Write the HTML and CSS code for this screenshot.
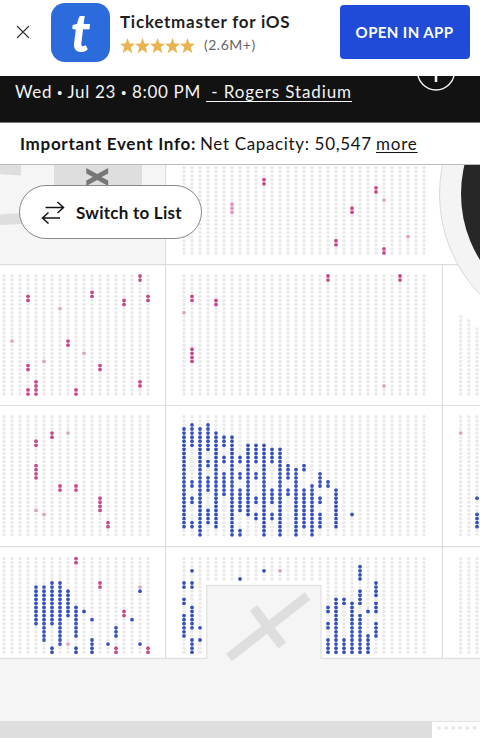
FILE: index.html
```html
<!DOCTYPE html>
<html lang="en">
<head>
<meta charset="utf-8">
<title>Rogers Stadium - Ticketmaster</title>
<link rel="stylesheet" href="styles.css">
</head>
<body>
<header class="banner">
  <svg class="close" viewBox="0 0 14 14"><path d="M1 1L13 13M13 1L1 13"/></svg>
  <div class="logo"><span class="logo-letter">t</span></div>
  <div class="app">
    <div class="app-name">Ticketmaster for iOS</div>
    <div class="rating">
      <svg class="stars" viewBox="0 0 75 16">
        <defs><path id="star" d="M7.5 0L9.5 5.6L15 5.8L10.7 9.2L12.3 15.2L7.5 11.8L2.7 15.2L4.3 9.2L0 5.8L5.5 5.6Z"/></defs>
        <use href="#star"/><use href="#star" x="15"/><use href="#star" x="30"/><use href="#star" x="45"/><use href="#star" x="60"/>
      </svg>
      <span class="count">(2.6M+)</span>
    </div>
  </div>
  <div class="open">OPEN IN APP</div>
</header>
<section class="event">
  <span class="date">Wed <span class="bullet">•</span> Jul 23 <span class="bullet">•</span> 8:00 PM</span><span class="venue">&nbsp;- Rogers Stadium</span>
  <svg class="plus" viewBox="0 0 42 16"><circle cx="21" cy="-4.5" r="18.5"/><path class="plus-stem" d="M21 0V6"/></svg>
</section>
<section class="info"><b class="info-label">Important Event Info:</b><span class="info-text">Net Capacity: 50,547</span><span class="more">more</span></section>
<main class="map">
  <svg class="seats" viewBox="0 165 480 573">
    <rect class="floor" x="0" y="165" width="165.5" height="99.5"/>
    <path class="shade" d="M54 165H142V210H54ZM0 165H21V175.5L0 174ZM0 214.500L22 213V224L0 225Z"/>
    <path class="gate" d="M86.300 168V173.500L92.800 177L86.300 180.500V186L97.200 180L108.200 186V180.500L101.500 177L108.200 173.500V168L97.200 174Z"/>
    <path class="line" d="M0 264.700H480M0 405.500H480M0 546.700H480M165.600 165V658.500M442.300 264.700V658.500"/>
    <circle class="ring" cx="584.500" cy="194" r="145"/>
    <circle class="stage" cx="585" cy="194" r="124"/>
    <path class="ground" d="M-2 658.500H206.700V585.500H321V658.500H482V740H-2Z"/>
    <path class="cross" d="M229 657.500L307.500 596M253.500 608L282.300 645.500"/>
    <path class="shade" d="M0 721H432V738H0Z"/>
    <path class="white" d="M432 721H480V738H432Z"/>
    <path class="white-edge" d="M432 721.500H480"/>
    <path class="row" d="M439 728H480"/>
    <g id="dots"></g>
  </svg>
  <div class="switch">
    <svg class="arrows" viewBox="0 0 24 24"><path d="M4.500 7.500H22M16.500 2L22.500 7.500L16.500 13M19 18H1.500M7.500 12.500L1.500 18L7.500 23.500"/></svg>
    <span class="switch-text">Switch to List</span>
  </div>
</main>
<script src="seats.js"></script>
</body>
</html>
```
FILE: seats.js
```js
const PITCH = 4.07;
// Each section: origin, column pitch, row count, column count, and runs as
// "column:first-last" for blue (b), resale (r), pale resale (p), accessible (k).
const sections = [
  { x: 184, y: 167.5, rows: 22, cols: 31,
    r: "10:3-4 24:5-6 21:10-11 19:18-19 25:20-21", p: "25:8 28:17", k: "6:9-11" },
  { x: 4, y: 276, rows: 30, cols: 19,
    r: "3:5-6 3:22-23 3:28-29 4:26-29 8:16-17 9:28-29 11:4-5 12:22-23 15:6-7 17:0-1 17:26-27 18:5-6",
    p: "1:16 5:21 7:8 10:19" },
  { x: 184, y: 276, rows: 30, cols: 31,
    r: "1:5-6 1:18-21 4:6-7 18:0-1 27:0-1", p: "0:9 25:27" },
  { x: 460.7, y: 276, rows: 30, cols: 3, dx: 8.15, starts: [10, 11, 13] },
  { x: 4, y: 416.8, rows: 30, cols: 19,
    r: "4:6-7 4:12-15 6:4-5 7:17-18 9:17-18 12:20-23 13:26-27", p: "4:23 5:24 8:4" },
  { x: 184, y: 416.8, rows: 30, cols: 31,
    b: "0:3-27 1:2-7 1:16-17 1:20-21 1:26-27 2:3-29 3:2-8 3:11-12 3:15-18 3:23-26 4:4-27 5:5-7 5:10-11 5:14-19 6:5-29 7:10-11 7:14-15 7:18-23 7:28-29 8:7-24 9:7-11 9:14-15 9:20-21 9:24-25 10:7-29 11:8-11 11:18-21 11:24-25 12:8-29 13:12-15 13:18-19 14:13-29 15:12-13 15:18-27 16:17-29 17:14-17 17:20-21 17:24-27 18:16-17 19:18-27 21:24" },
  { x: 460.7, y: 416.8, rows: 30, cols: 3, dx: 8.15, b: "2:20 2:24-27", p: "0:4" },
  { x: 4, y: 558.6, rows: 24, cols: 19,
    b: "4:7-16 5:7-20 6:6-16 6:22-23 7:6-21 8:8-14 9:12-19 9:22-23 10:13 11:15 11:20-23 13:21 14:17-19 16:15 17:8 17:21",
    r: "9:0-1 12:6-7 14:22-23 15:13-14 18:22-23", p: "8:21 17:7" },
  { x: 184, y: 558.6, rows: 24, cols: 31, notch: [3, 17, 5],
    b: "0:6-7 0:10-11 0:14-19 1:3 1:6-7 1:12-17 1:20-23 2:17 2:20 7:5 10:3 18:12-13 18:16-17 18:20-23 19:10-23 20:10-11 20:20-23 21:11-23 22:2-5 22:8-11 22:14-23 23:13 23:19-23 24:6-9 24:11-13 24:16-19",
    p: "12:3" },
  { x: 460.7, y: 558.6, rows: 24, cols: 3, dx: 8.15 }
];
const group = document.getElementById("dots");
function dot(s, col, row, kind) {
  const c = document.createElementNS("http://www.w3.org/2000/svg", "circle");
  c.setAttribute("cx", s.x + col * (s.dx || 8));
  c.setAttribute("cy", (s.y + row * PITCH).toFixed(2));
  c.setAttribute("r", kind === "off" ? 1.7 : 1.9);
  c.setAttribute("class", "seat-" + kind);
  group.appendChild(c);
}
for (const s of sections) {
  const taken = new Map();
  for (const kind of ["b", "r", "p", "k"]) {
    for (const run of (s[kind] || "").split(" ").filter(Boolean)) {
      const [col, range] = run.split(":");
      const [a, z] = range.split("-").map(Number);
      for (let r = a; r <= (z ?? a); r++) taken.set(col + ":" + r, kind);
    }
  }
  for (let col = 0; col < s.cols; col++) {
    for (let row = s.starts ? s.starts[col] : 0; row < s.rows; row++) {
      if (s.notch && col >= s.notch[0] && col <= s.notch[1] && row > s.notch[2]) continue;
      dot(s, col, row, taken.get(col + ":" + row) || "off");
    }
  }
}
```
FILE: styles.css
```css
* { box-sizing: border-box; }
body { margin: 0; width: 480px; height: 738px; overflow: hidden; background: #fff; color: #1f1f1f; font-family: Lato, "Liberation Sans", sans-serif; white-space: nowrap; }
.banner { height: 76px; display: flex; align-items: flex-start; padding-left: 16px; }
.close { width: 14px; height: 14px; margin-top: 25px; fill: none; stroke: #333; stroke-width: 1.1; }
.logo { width: 59px; height: 59px; margin: 3px 0 0 21px; border-radius: 14px; background: #2c6bdc; color: #fff; display: flex; justify-content: center; }
.logo-letter { font: italic 900 53px/57px Lato, sans-serif; }
.app { margin: 11px 0 0 10px; width: 219.500px; }
.app-name { font-size: 17px; line-height: 22px; font-weight: 700; letter-spacing: 0.75px; }
.rating { display: flex; align-items: center; gap: 9px; height: 22px; margin-top: 0; }
.stars { width: 75px; height: 16px; fill: #e8b451; margin-top: 3px; }
.count { font-size: 14px; color: #666; letter-spacing: 0.5px; }
.open { width: 130px; height: 54px; margin: 5px 0 0 0; border-radius: 4px; background: #1f4bd8; color: #fff; font-size: 15px; font-weight: 700; letter-spacing: 0.4px; line-height: 54px; text-align: center; }
.event { height: 47px; background: #121212; border-bottom: 1px solid #777; color: #f4f4f4; display: flex; padding-left: 15px; font-size: 17px; line-height: 31px; }
.date { width: 191px; letter-spacing: 0.7px; }
.bullet { font: 14px/20px "Liberation Sans", sans-serif; }
.venue { width: 146px; letter-spacing: 0.9px; text-decoration: underline; text-underline-offset: 3px; text-decoration-thickness: 1px; }
.plus { width: 42px; height: 16px; margin-left: 62.500px; fill: none; stroke: #f4f4f4; stroke-width: 1.4; }
.plus-stem { stroke-width: 2.600; }
.info { height: 42px; padding-left: 20px; display: flex; font-size: 17px; line-height: 41px; border-bottom: 1px solid #bbb; color: #151515; }
.info-label { width: 180px; letter-spacing: 0.7px; }
.info-text { width: 176px; letter-spacing: 0.65px; }
.more { letter-spacing: 0.8px; text-decoration: underline; text-underline-offset: 2px; text-decoration-thickness: 1px; }
.map { height: 573px; display: grid; }
.seats { grid-area: 1 / 1; width: 480px; height: 573px; display: block; }
.switch { grid-area: 1 / 1; width: 183px; height: 54px; margin: 20px 0 0 19px; border: 1px solid #888; border-radius: 27px; background: #fff; display: flex; align-items: center; padding-left: 21px; gap: 11px; }
.arrows { width: 24px; height: 24px; fill: none; stroke: #151515; stroke-width: 1.5; }
.switch-text { font-size: 17px; font-weight: 700; letter-spacing: 0.25px; color: #151515; }
.floor { fill: #f5f5f5; }
.shade { fill: #dedede; }
.gate { fill: #777; }
.line { fill: none; stroke: #ddd; stroke-width: 1.2; }
.ring { fill: #f4f4f4; stroke: #d8d8d8; stroke-width: 1; }
.stage { fill: #272727; }
.ground { fill: #f5f5f5; stroke: #e2e2e2; stroke-width: 1.3; }
.cross { stroke: #dedede; stroke-width: 9.500; }
.white { fill: #fff; }
.white-edge { stroke: #e4e4e4; }
.row { stroke: #e5e5e5; stroke-width: 3.600; stroke-linecap: round; stroke-dasharray: 0 7.100; }
.seat-off { fill: #e9e9e9; }
.seat-b { fill: #3650bd; }
.seat-r { fill: #c9478b; }
.seat-p { fill: #dca4bf; }
.seat-k { fill: #e491c2; }
```
